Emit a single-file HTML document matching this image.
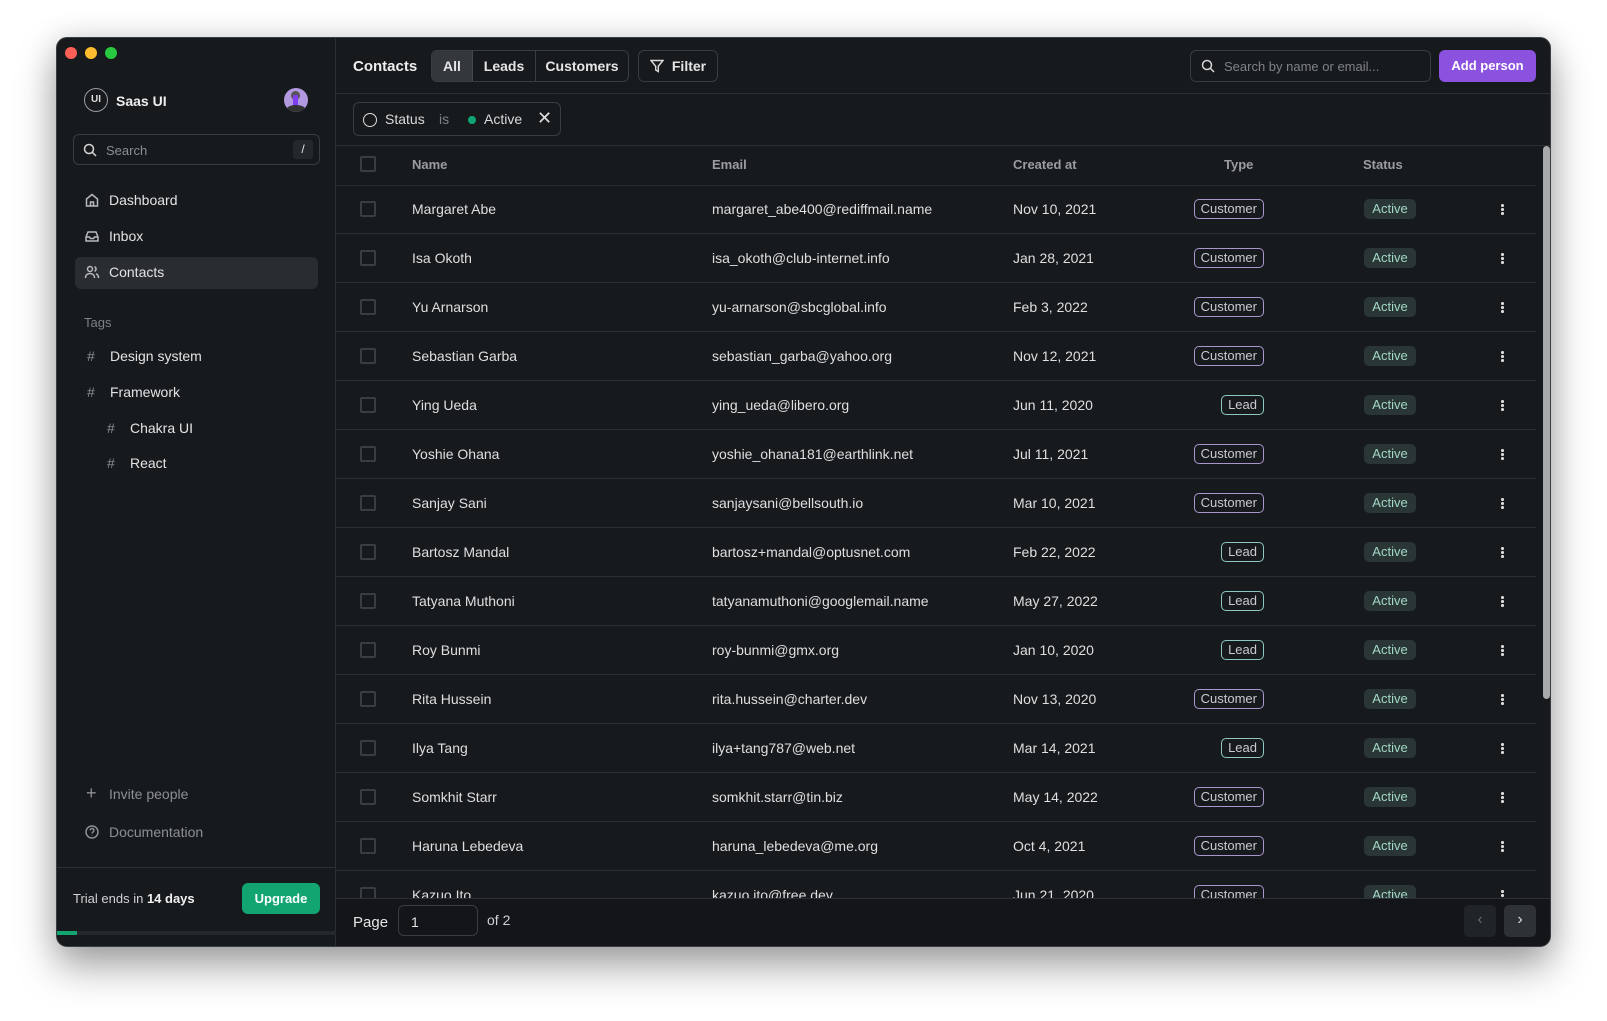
<!DOCTYPE html>
<html><head><meta charset="utf-8"><style>
*{box-sizing:border-box;margin:0;padding:0}
body{width:1607px;height:1021px;background:#fff;font-family:"Liberation Sans",sans-serif;position:relative;overflow:hidden;color:#e4e5e7}
.win{position:absolute;left:56px;top:37px;width:1495px;height:910px;background:#171a1d;border-radius:11px;border:1px solid #3a3d41;overflow:hidden;box-shadow:0 20px 40px rgba(0,0,0,.35),0 0 30px rgba(0,0,0,.12)}
.a{position:absolute}
.dot{position:absolute;top:9px;width:12px;height:12px;border-radius:50%}
.side{position:absolute;left:0;top:0;width:279px;height:910px;border-right:1px solid #2c2f33}
.nav{position:absolute;left:17px;font-size:14px;color:#e2e3e5;display:flex;align-items:center;gap:9px}
.nav svg{width:16px;height:16px;stroke:#b7b9bd;fill:none;stroke-width:1.5}
.muted{color:#8a8d92}
.btn{position:absolute;border:1px solid #393c41;border-radius:6px;font-size:14px;font-weight:bold;display:flex;align-items:center;justify-content:center}
.row{position:absolute;left:279px;width:1200px;height:49px;border-bottom:1px solid #2c2f33;font-size:14px;color:#dedfe1}
.row span{position:absolute;top:16px}
.cb{position:absolute;left:24px;top:16px;width:16px;height:16px;border:2px solid #3a3d42;border-radius:2px}
.badge{position:absolute;top:14px;height:20px;border-radius:5px;font-size:13px;line-height:18px;padding:0 6px;color:#c9cacd}
.cust{border:1.5px solid #a996cf;right:272px}
.lead{border:1.5px solid #8cc7c2;right:272px}
.act{left:1028px;width:52px;background:#2a3535;color:#a2d8c8;text-align:center;padding:0;line-height:20px}
.more{position:absolute;left:1165px;top:19px;width:3px}
.more i{display:block;width:2.5px;height:2.5px;background:#ddd;border-radius:50%;margin-bottom:1.5px}
</style></head><body>
<div class="win">
 <div class="dot" style="left:8px;background:#fe5f57"></div>
 <div class="dot" style="left:28px;background:#febc2e"></div>
 <div class="dot" style="left:48px;background:#28c840"></div>
 <div class="side">
  <div class="a" style="left:27px;top:50px;width:24px;height:24px;border:1.5px solid #9a9ca0;border-radius:50%;font-size:10px;font-weight:bold;text-align:center;line-height:21px;color:#ddd">UI</div>
  <div class="a" style="left:59px;top:55px;font-size:14px;font-weight:bold;color:#eee">Saas UI</div>
  <div class="a" style="left:227px;top:50px;width:24px;height:24px;border-radius:50%;background:#b39ae0;overflow:hidden"><div style="position:absolute;left:7px;top:3px;width:9px;height:9px;background:#555;border-radius:50%"></div><div style="position:absolute;left:9px;top:7px;width:5px;height:11px;background:#7f3ff0"></div><div style="position:absolute;left:3px;top:17px;width:18px;height:8px;background:#333;border-radius:50% 50% 0 0"></div></div>
  <div class="a" style="left:16px;top:96px;width:247px;height:31px;border:1px solid #393c41;border-radius:6px">
   <svg class="a" style="left:9px;top:8px" width="14" height="14" viewBox="0 0 14 14" fill="none" stroke="#d5d6d8" stroke-width="1.5"><circle cx="6" cy="6" r="4.5"/><path d="M9.5 9.5L13 13"/></svg>
   <div class="a muted" style="left:32px;top:8px;font-size:13px">Search</div>
   <div class="a" style="right:6px;top:5px;width:20px;height:19px;background:#24272b;border-radius:3px;font-size:12px;text-align:center;line-height:19px">/</div>
  </div>
  <div class="a" style="left:18px;top:219px;width:243px;height:32px;background:#292c30;border-radius:6px"></div>
  <div class="nav" style="top:154px;left:27px"><svg viewBox="0 0 16 16"><path d="M2.5 7L8 2.5 13.5 7V14h-11z M6.5 14V10h3v4"/></svg>Dashboard</div>
  <div class="nav" style="top:190px;left:27px"><svg viewBox="0 0 16 16"><path d="M2 9l2-5h8l2 5v4H2z M2 9h3.5l1 1.5h3l1-1.5H14"/></svg>Inbox</div>
  <div class="nav" style="top:226px;left:27px"><svg viewBox="0 0 16 16"><circle cx="6" cy="5" r="2.5"/><path d="M1.5 14c0-3 2-4.5 4.5-4.5s4.5 1.5 4.5 4.5M10.5 2.7a2.5 2.5 0 010 4.6M12 9.8c1.5.5 2.5 2 2.5 4.2"/></svg>Contacts</div>
  <div class="a" style="left:27px;top:277px;font-size:13px;color:#7d8085">Tags</div>
  <div class="nav" style="top:310px;left:30px"><span class="muted" style="width:14px">#</span>Design system</div>
  <div class="nav" style="top:346px;left:30px"><span class="muted" style="width:14px">#</span>Framework</div>
  <div class="nav" style="top:382px;left:50px"><span class="muted" style="width:14px">#</span>Chakra UI</div>
  <div class="nav" style="top:417px;left:50px"><span class="muted" style="width:14px">#</span>React</div>
  <div class="nav" style="top:745px;left:29px;color:#8c8f94"><span style="width:14px;font-size:18px">+</span>Invite people</div>
  <div class="nav" style="top:786px;left:27px;color:#8c8f94"><svg viewBox="0 0 16 16" style="stroke:#8c8f94"><circle cx="8" cy="8" r="6"/><path d="M6.3 6.3a1.8 1.8 0 113 1.4c-.8.5-1.3.8-1.3 1.8M8 11.3v.3"/></svg>Documentation</div>
  <div class="a" style="left:0;top:829px;width:279px;border-top:1px solid #2c2f33"></div>
  <div class="a" style="left:16px;top:853px;font-size:13px;color:#d0d1d4">Trial ends in <b style="color:#f0f0f0">14 days</b></div>
  <div class="a" style="left:185px;top:845px;width:78px;height:31px;background:#12a572;border-radius:6px;font-size:13px;font-weight:bold;text-align:center;line-height:31px;color:#fff">Upgrade</div>
  <div class="a" style="left:0;top:893px;width:279px;height:4px;background:#25282c"></div>
  <div class="a" style="left:0;top:893px;width:20px;height:4px;background:#12a572"></div>
 </div>
 <div class="a" style="left:279px;top:0;width:1216px;height:56px;border-bottom:1px solid #2c2f33"></div>
 <div class="a" style="left:296px;top:20px;font-size:15px;font-weight:bold;color:#eee">Contacts</div>
 <div class="btn" style="left:374px;top:12px;width:198px;height:32px;justify-content:flex-start;overflow:hidden">
  <div style="width:41px;height:100%;background:#34373b;border-right:1px solid #45484d;display:flex;align-items:center;justify-content:center">All</div>
  <div style="width:63px;height:100%;border-right:1px solid #393c41;display:flex;align-items:center;justify-content:center">Leads</div>
  <div style="flex:1;display:flex;align-items:center;justify-content:center">Customers</div>
 </div>
 <div class="btn" style="left:581px;top:12px;width:80px;height:32px;gap:8px"><svg width="14" height="14" viewBox="0 0 14 14" fill="none" stroke="#ddd" stroke-width="1.4"><path d="M1 1.5h12L8.3 7.3V12.5L5.7 11V7.3z"/></svg>Filter</div>
 <div class="a" style="left:1133px;top:12px;width:241px;height:32px;border:1px solid #393c41;border-radius:6px">
  <svg class="a" style="left:10px;top:8px" width="14" height="14" viewBox="0 0 14 14" fill="none" stroke="#d5d6d8" stroke-width="1.5"><circle cx="6" cy="6" r="4.5"/><path d="M9.5 9.5L13 13"/></svg>
  <div class="a" style="left:33px;top:8px;font-size:13px;color:#7f8287">Search by name or email...</div>
 </div>
 <div class="a" style="left:1382px;top:12px;width:97px;height:32px;background:#8a52df;border-radius:6px;font-size:13px;font-weight:bold;text-align:center;line-height:32px;color:#fff">Add person</div>
 <div class="a" style="left:279px;top:56px;width:1216px;height:52px;border-bottom:1px solid #2c2f33"></div>
 <div class="a" style="left:296px;top:64px;width:208px;height:34px;border:1px solid #393c41;border-radius:6px;font-size:14px">
  <div class="a" style="left:9px;top:10px;width:14px;height:14px;border:1.5px solid #ddd;border-radius:50%"></div>
  <div class="a" style="left:31px;top:8px;color:#d8d9db">Status</div>
  <div class="a" style="left:85px;top:8px;color:#7f8287">is</div>
  <div class="a" style="left:114px;top:13px;width:8px;height:8px;border-radius:50%;background:#12a572"></div>
  <div class="a" style="left:130px;top:8px;color:#d8d9db">Active</div>
  <div class="a" style="left:183px;top:5px;font-size:18px;color:#ddd">✕</div>
 </div>
 <div class="a" style="left:279px;top:108px;width:1200px;height:40px;border-bottom:1px solid #26292d;font-size:13px;font-weight:bold;color:#9a9ca1">
  <div class="cb" style="top:10px"></div>
  <span class="a" style="left:76px;top:11px">Name</span>
  <span class="a" style="left:376px;top:11px">Email</span>
  <span class="a" style="left:677px;top:11px">Created at</span>
  <span class="a" style="left:888px;top:11px">Type</span>
  <span class="a" style="left:1027px;top:11px">Status</span>
 </div>
 <div class="a" style="left:279px;top:148px;width:1216px;height:712px;overflow:hidden">
 <div id="rows" style="position:relative;left:-279px;top:-1px"></div>
 </div>
 <div class="a" style="left:1486px;top:108px;width:7px;height:553px;background:#a8a9ab;border-radius:4px"></div>
 <div class="a" style="left:279px;top:860px;width:1216px;height:50px;border-top:1px solid #2c2f33;background:#131518"></div>
 <div class="a" style="left:296px;top:876px;font-size:15px;color:#e4e5e7">Page</div>
 <div class="a" style="left:341px;top:867px;width:80px;height:31px;border:1px solid #393c41;border-radius:6px;font-size:14px;padding:8px 12px">1</div>
 <div class="a" style="left:430px;top:874px;font-size:14px;color:#d0d1d4">of 2</div>
 <div class="a" style="left:1407px;top:867px;width:32px;height:32px;background:#212427;border-radius:5px;color:#666;text-align:center;line-height:30px;font-size:16px">‹</div>
 <div class="a" style="left:1447px;top:867px;width:32px;height:32px;background:#2e3135;border-radius:5px;color:#ddd;text-align:center;line-height:30px;font-size:16px">›</div>
</div>
<script>
var d=[["Margaret Abe","margaret_abe400@rediffmail.name","Nov 10, 2021","C"],["Isa Okoth","isa_okoth@club-internet.info","Jan 28, 2021","C"],["Yu Arnarson","yu-arnarson@sbcglobal.info","Feb 3, 2022","C"],["Sebastian Garba","sebastian_garba@yahoo.org","Nov 12, 2021","C"],["Ying Ueda","ying_ueda@libero.org","Jun 11, 2020","L"],["Yoshie Ohana","yoshie_ohana181@earthlink.net","Jul 11, 2021","C"],["Sanjay Sani","sanjaysani@bellsouth.io","Mar 10, 2021","C"],["Bartosz Mandal","bartosz+mandal@optusnet.com","Feb 22, 2022","L"],["Tatyana Muthoni","tatyanamuthoni@googlemail.name","May 27, 2022","L"],["Roy Bunmi","roy-bunmi@gmx.org","Jan 10, 2020","L"],["Rita Hussein","rita.hussein@charter.dev","Nov 13, 2020","C"],["Ilya Tang","ilya+tang787@web.net","Mar 14, 2021","L"],["Somkhit Starr","somkhit.starr@tin.biz","May 14, 2022","C"],["Haruna Lebedeva","haruna_lebedeva@me.org","Oct 4, 2021","C"],["Kazuo Ito","kazuo.ito@free.dev","Jun 21, 2020","C"]];
var h="";d.forEach(function(r,i){h+='<div class="row" style="top:'+(49*i)+'px"><div class="cb"></div><span style="left:76px">'+r[0]+'</span><span style="left:376px">'+r[1]+'</span><span style="left:677px">'+r[2]+'</span>'+(r[3]=="C"?'<div class="badge cust">Customer</div>':'<div class="badge lead">Lead</div>')+'<div class="badge act">Active</div><div class="more"><i></i><i></i><i></i></div></div>';});
document.getElementById("rows").innerHTML=h;
</script>
</body></html>
